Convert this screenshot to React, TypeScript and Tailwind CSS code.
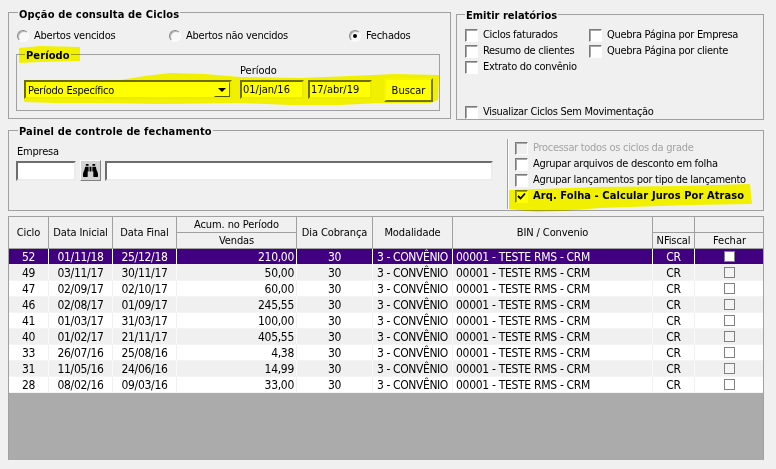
import { FaBinoculars } from "react-icons/fa";

const font = { fontFamily: '"DejaVu Sans Condensed", "DejaVu Sans", sans-serif' };

const rows = [
  ["52", "01/11/18", "25/12/18", "210,00"],
  ["49", "03/11/17", "30/11/17", "50,00"],
  ["47", "02/09/17", "02/10/17", "60,00"],
  ["46", "02/08/17", "01/09/17", "245,55"],
  ["41", "01/03/17", "31/03/17", "100,00"],
  ["40", "01/02/17", "21/11/17", "405,55"],
  ["33", "26/07/16", "25/08/16", "4,38"],
  ["31", "11/05/16", "24/06/16", "14,99"],
  ["28", "08/02/16", "09/03/16", "33,00"],
];

function Check({ checked, disabled }: { checked?: boolean; disabled?: boolean }) {
  return (
    <span
      className={`flex h-[13px] w-[13px] shrink-0 items-center justify-center border border-t-[#7a7a7a] border-l-[#7a7a7a] border-r-[#fdfdfd] border-b-[#fdfdfd] shadow-[inset_1px_1px_0_#a8a8a8] ${
        disabled ? "bg-[#f0f0f0]" : "bg-white"
      }`}
    >
      {checked && (
        <svg width="9" height="9" viewBox="0 0 9 9">
          <path d="M1 4 L3.5 6.5 L8 1.5" fill="none" stroke="#000" strokeWidth="1.8" />
        </svg>
      )}
    </span>
  );
}

function CheckRow({ label, checked, disabled, bold }: { label: string; checked?: boolean; disabled?: boolean; bold?: boolean }) {
  return (
    <div className="flex h-4 items-center gap-[5px]">
      <Check checked={checked} disabled={disabled} />
      <span className={`whitespace-nowrap ${disabled ? "text-[#a3a3a3]" : "text-black"} ${bold ? "font-bold tracking-[0.1px]" : "tracking-[-0.3px]"}`}>{label}</span>
    </div>
  );
}

function Radio({ label, checked, width }: { label: string; checked?: boolean; width: string }) {
  return (
    <div className={`flex h-[14px] items-center gap-[5px] ${width}`}>
      <span className="flex h-3 w-3 items-center justify-center rounded-full border border-t-[#8a8a8a] border-l-[#8a8a8a] border-r-[#fdfdfd] border-b-[#fdfdfd] bg-[#f8f8f8] shadow-[inset_1px_1px_0_#b8b8b8]">
        {checked && <span className="h-1 w-1 rounded-full bg-black" />}
      </span>
      <span className="whitespace-nowrap tracking-[-0.25px]">{label}</span>
    </div>
  );
}

const sunken = "border-2 border-t-[#6d6d6d] border-l-[#6d6d6d] border-r-[#ececec] border-b-[#ececec] bg-white";
const legend = "ml-[9px] h-[14px] whitespace-nowrap px-px text-[11px] leading-[14px] font-bold tracking-[0.15px] text-black";
const cols = "grid-cols-[40px_64px_64px_120px_76px_80px_200px_42px_69px]";
const hcell = "flex items-center justify-center whitespace-nowrap border-r border-[#a0a0a0] tracking-[-0.1px]";

export default function App() {
  return (
    <div style={font} className="relative h-[469px] w-[776px] overflow-hidden bg-[#f0f0f0] px-2 pt-[5px] text-[11px] leading-[14px] text-black">
      <div className="flex items-start gap-[5px]">
        <fieldset className="h-[114px] w-[443px] border border-[#a0a0a0]">
          <legend className={`${legend} pt-[3px]`}>Opção de consulta de Ciclos</legend>
          <div className="flex pl-2 pt-[10px]">
            <Radio label="Abertos vencidos" width="w-[152px]" />
            <Radio label="Abertos não vencidos" width="w-[180px]" />
            <Radio label="Fechados" checked width="w-[80px]" />
          </div>
          <fieldset className="ml-[7px] mt-[4px] h-[64px] w-[424px] border border-[#a0a0a0]">
            <legend className="ml-[8px] h-[14px] px-px pt-[2px] text-[11px] leading-[14px] font-bold tracking-[0.1px]">Período</legend>
            <div className="flex items-end pl-[7px] pt-[3px]">
              <div className={`mb-[3px] flex h-[19px] w-[208px] items-center justify-between ${sunken}`}>
                <span className="pl-[2px] pt-[2px] tracking-[-0.2px]">Período Específico</span>
                <span className="flex h-[15px] w-4 items-center justify-center border border-t-white border-l-white border-r-[#555] border-b-[#555] bg-white">
                  <svg width="8" height="4" viewBox="0 0 8 4">
                    <path d="M0 0 H8 L4 4 Z" fill="#000" />
                  </svg>
                </span>
              </div>
              <div className="mb-[3px] ml-2 flex flex-col">
                <span className="mb-[2px] h-[14px]">Período</span>
                <div className="flex gap-1">
                  <div className={`flex h-[19px] w-16 items-center pl-[1px] pt-px ${sunken}`}>01/jan/16</div>
                  <div className={`flex h-[19px] w-16 items-center pl-[1px] pt-px ${sunken}`}>17/abr/19</div>
                </div>
              </div>
              <button className="ml-3 h-6 w-[49px] border-2 border-t-[#f5f5f5] border-l-[#f5f5f5] border-r-[#777] border-b-[#777] bg-white pt-px text-[11px]">
                Buscar
              </button>
            </div>
          </fieldset>
        </fieldset>

        <fieldset className="mt-[2px] h-[113px] w-[308px] border border-[#a0a0a0]">
          <legend className="ml-[8px] h-[14px] whitespace-nowrap px-px pt-[2px] text-[11px] leading-[14px] font-bold">Emitir relatórios</legend>
          <div className="pl-[8px] pt-[6px]">
            <div className="grid grid-cols-[124px_1fr]">
              <CheckRow label="Ciclos faturados" />
              <CheckRow label="Quebra Página por Empresa" />
              <CheckRow label="Resumo de clientes" />
              <CheckRow label="Quebra Página por cliente" />
              <CheckRow label="Extrato do convênio" />
            </div>
            <div className="mt-[29px]">
              <CheckRow label="Visualizar Ciclos Sem Movimentação" />
            </div>
          </div>
        </fieldset>
      </div>

      <fieldset className="mt-[3px] h-[88px] w-[756px] border border-[#a0a0a0]">
        <legend className={`${legend} pt-[2px]`}>Painel de controle de fechamento</legend>
        <div className="flex pt-[1px]">
          <div className="ml-[7px] flex w-[477px] flex-col pt-[7px]">
            <span className="ml-px h-[14px] tracking-[-0.2px]">Empresa</span>
            <div className="mt-[1px] flex items-center gap-1">
              <div className={`h-[20px] w-[60px] ${sunken}`} />
              <div className="flex h-[21px] w-[21px] items-center justify-center border border-t-white border-l-white border-r-[#808080] border-b-[#808080] bg-[#d4d4d4]">
                <FaBinoculars size={15} color="#000" />
              </div>
              <div className={`h-[20px] w-[388px] ${sunken}`} />
            </div>
          </div>
          <div className="ml-[14px] mt-px h-[70px] w-[2px] border-l border-r border-l-[#a0a0a0] border-r-white" />
          <div className="ml-[6px] pt-[2px]">
            <CheckRow label="Processar todos os ciclos da grade" disabled />
            <CheckRow label="Agrupar arquivos de desconto em folha" />
            <CheckRow label="Agrupar lançamentos por tipo de lançamento" />
            <CheckRow label="Arq. Folha - Calcular Juros Por Atraso" checked bold />
          </div>
        </div>
      </fieldset>

      <div className="mt-[5px] h-[244px] w-[756px] border border-[#a0a0a0] border-b-0 bg-[#ababab]">
        <div className={`grid ${cols} grid-rows-[16px_15px] border-b border-[#a0a0a0] bg-[#f0f0f0]`}>
          <div className={`${hcell} row-span-2`}>Ciclo</div>
          <div className={`${hcell} row-span-2`}>Data Inicial</div>
          <div className={`${hcell} row-span-2`}>Data Final</div>
          <div className={`${hcell} border-b`}>Acum. no Período</div>
          <div className={`${hcell} row-span-2`}>Dia Cobrança</div>
          <div className={`${hcell} row-span-2`}>Modalidade</div>
          <div className={`${hcell} row-span-2`}>BIN / Convenio</div>
          <div className={`${hcell} border-b`} />
          <div className="border-b border-[#a0a0a0]" />
          <div className={`${hcell} col-start-4 row-start-2`}>Vendas</div>
          <div className={`${hcell} col-start-8 row-start-2`}>NFiscal</div>
          <div className="col-start-9 row-start-2 flex items-center justify-center">Fechar</div>
        </div>
        {rows.map((r, i) => {
          const selected = i === 0;
          const rowCls = selected
            ? "bg-[#400080] text-white"
            : i % 2 === 1
              ? "bg-[#f0f0f0] text-black"
              : "bg-white text-black";
          const sep = selected ? "border-white" : i % 2 === 1 ? "border-[#fafafa]" : "border-[#f0f0f0]";
          const cell = `flex items-center whitespace-nowrap border-r ${sep}`;
          return (
            <div
              key={r[0]}
              className={`grid h-4 ${cols} border-b ${
                selected ? "border-[#f0f0f0]" : "border-[#f4f4f4]"
              } text-[12px] tracking-[-0.3px] ${rowCls}`}
            >
              <div className={`${cell} justify-center`}>{r[0]}</div>
              <div className={`${cell} justify-center`}>{r[1]}</div>
              <div className={`${cell} justify-center`}>{r[2]}</div>
              <div className={`${cell} justify-end pr-[2px]`}>{r[3]}</div>
              <div className={`${cell} justify-center`}>30</div>
              <div className={`${cell} justify-center tracking-[-0.4px]`}>3 - CONVÊNIO</div>
              <div className={`${cell} pl-[3px]`}>00001 - TESTE RMS - CRM</div>
              <div className={`${cell} justify-center`}>CR</div>
              <div className="flex items-center justify-center">
                <span className={`h-[11px] w-[11px] border border-[#808080] ${selected ? "bg-white" : i % 2 === 1 ? "bg-[#f4f4f4]" : "bg-white"}`} />
              </div>
            </div>
          );
        })}
      </div>

      <svg className="pointer-events-none absolute left-0 top-0 mix-blend-multiply" width="776" height="469" viewBox="0 0 776 469">
        <path d="M19 48 L40 46 L80 47 L80 61 L40 62 L19 63 Z" fill="#ffff00" />
        <path d="M24 80 L120 80 L145 76 L170 73 L205 74 L240 77 L300 78 L350 76 L395 74 L439 75 L438 100 L430 103 L380 103 L340 105 L290 105 L240 103 L160 104 L100 103 L55 103 L24 102 Z" fill="#ffff00" />
        <path d="M509 190 L600 187 L680 186 L750 184 L752 204 L690 205 L600 208 L562 211 L536 212 L509 209 Z" fill="#ffff00" />
      </svg>
    </div>
  );
}
